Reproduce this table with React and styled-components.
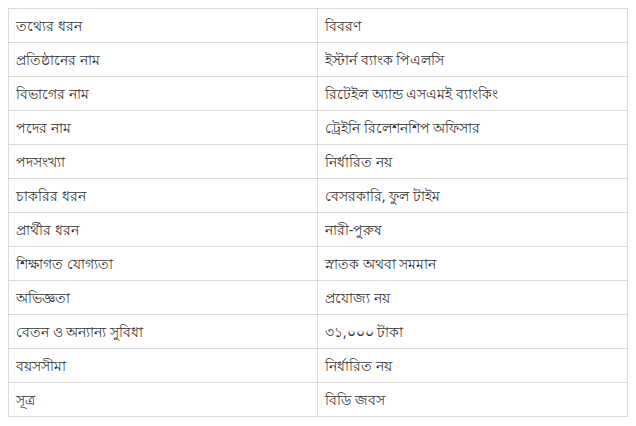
import React from "react";
import styled, { createGlobalStyle } from "styled-components";

const rows = [
  ["তথ্যের ধরন", "বিবরণ"],
  ["প্রতিষ্ঠানের নাম", "ইস্টার্ন ব্যাংক পিএলসি"],
  ["বিভাগের নাম", "রিটেইল অ্যান্ড এসএমই ব্যাংকিং"],
  ["পদের নাম", "ট্রেইনি রিলেশনশিপ অফিসার"],
  ["পদসংখ্যা", "নির্ধারিত নয়"],
  ["চাকরির ধরন", "বেসরকারি, ফুল টাইম"],
  ["প্রার্থীর ধরন", "নারী-পুরুষ"],
  ["শিক্ষাগত যোগ্যতা", "স্নাতক অথবা সমমান"],
  ["অভিজ্ঞতা", "প্রযোজ্য নয়"],
  ["বেতন ও অন্যান্য সুবিধা", "৩১,০০০ টাকা"],
  ["বয়সসীমা", "নির্ধারিত নয়"],
  ["সূত্র", "বিডি জবস"],
];

const Global = createGlobalStyle`
  body {
    margin: 8px;
    background: #fff;
    font-family: "Noto Sans", "Liberation Sans", sans-serif;
  }
`;

const Table = styled.table`
  width: 620px;
  border-collapse: collapse;
  table-layout: fixed;
  color: #333;
  font-size: 13.5px;
`;

const Row = styled.tr`
  height: 34px;
`;

const Cell = styled.td`
  width: ${({ $w }) => $w};
  padding: 0 7px;
  border: 1px solid #dcdcdc;
  vertical-align: middle;
  line-height: 16px;
`;

export default function App() {
  return (
    <>
      <Global />
      <Table>
        <tbody>
          {rows.map(([k, v]) => (
            <Row key={k}>
              <Cell $w="294px">{k}</Cell>
              <Cell>{v}</Cell>
            </Row>
          ))}
        </tbody>
      </Table>
    </>
  );
}
